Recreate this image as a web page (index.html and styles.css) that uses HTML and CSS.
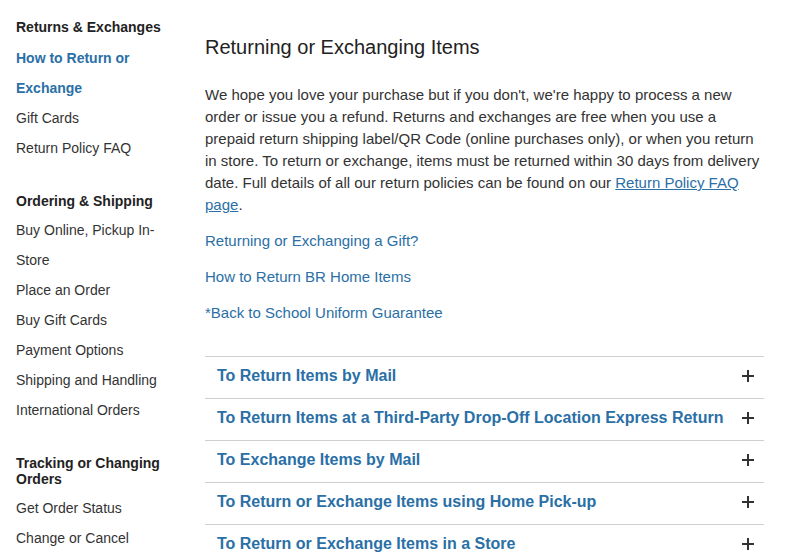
FILE: index.html
```html
<!DOCTYPE html>
<html lang="en">
<head>
<meta charset="utf-8">
<title>Returning or Exchanging Items</title>
<link rel="stylesheet" href="styles.css">
</head>
<body>
<div class="page">
  <nav class="sidebar">
    <div class="group">
      <h3 class="group-title">Returns &amp; Exchanges</h3>
      <a class="nav-link active" href="#">How to Return or Exchange</a>
      <a class="nav-link" href="#">Gift Cards</a>
      <a class="nav-link" href="#">Return Policy FAQ</a>
    </div>
    <div class="group">
      <h3 class="group-title">Ordering &amp; Shipping</h3>
      <a class="nav-link" href="#">Buy Online, Pickup In-Store</a>
      <a class="nav-link" href="#">Place an Order</a>
      <a class="nav-link" href="#">Buy Gift Cards</a>
      <a class="nav-link" href="#">Payment Options</a>
      <a class="nav-link" href="#">Shipping and Handling</a>
      <a class="nav-link" href="#">International Orders</a>
    </div>
    <div class="group">
      <h3 class="group-title">Tracking or Changing Orders</h3>
      <a class="nav-link" href="#">Get Order Status</a>
      <a class="nav-link" href="#">Change or Cancel</a>
    </div>
  </nav>
  <main class="content">
    <h1 class="title">Returning or Exchanging Items</h1>
    <p class="intro">We hope you love your purchase but if you don't, we're happy to process a new order or issue you a refund. Returns and exchanges are free when you use a prepaid return shipping label/QR Code (online purchases only), or when you return in store. To return or exchange, items must be returned within 30 days from delivery date. Full details of all our return policies can be found on our <a class="inline-link" href="#">Return Policy FAQ page</a>.</p>
    <a class="quick-link" href="#">Returning or Exchanging a Gift?</a>
    <a class="quick-link" href="#">How to Return BR Home Items</a>
    <a class="quick-link" href="#">*Back to School Uniform Guarantee</a>
    <div class="accordion">
      <div class="acc-row"><span class="acc-title">To Return Items by Mail</span><svg class="plus" width="14" height="14" viewBox="0 0 14 14"><path d="M7 1v12M1 7h12" stroke="#333" stroke-width="2"/></svg></div>
      <div class="acc-row"><span class="acc-title">To Return Items at a Third-Party Drop-Off Location Express Return</span><svg class="plus" width="14" height="14" viewBox="0 0 14 14"><path d="M7 1v12M1 7h12" stroke="#333" stroke-width="2"/></svg></div>
      <div class="acc-row"><span class="acc-title">To Exchange Items by Mail</span><svg class="plus" width="14" height="14" viewBox="0 0 14 14"><path d="M7 1v12M1 7h12" stroke="#333" stroke-width="2"/></svg></div>
      <div class="acc-row"><span class="acc-title">To Return or Exchange Items using Home Pick-up</span><svg class="plus" width="14" height="14" viewBox="0 0 14 14"><path d="M7 1v12M1 7h12" stroke="#333" stroke-width="2"/></svg></div>
      <div class="acc-row"><span class="acc-title">To Return or Exchange Items in a Store</span><svg class="plus" width="14" height="14" viewBox="0 0 14 14"><path d="M7 1v12M1 7h12" stroke="#333" stroke-width="2"/></svg></div>
    </div>
  </main>
</div>
</body>
</html>
```
FILE: styles.css
```css
html, body {
  margin: 0;
  padding: 0;
  background: #fff;
  font-family: "Liberation Sans", Arial, sans-serif;
  color: #333;
}
.page {
  display: flex;
  align-items: flex-start;
  height: 558px;
  overflow: hidden;
}
.sidebar {
  width: 155px;
  flex: none;
  padding: 19px 0 0 16px;
  display: flex;
  flex-direction: column;
  gap: 30px;
}
.group {
  display: flex;
  flex-direction: column;
}
.group-title {
  margin: 0 0 6px;
  font-size: 14px;
  line-height: 16px;
  font-weight: bold;
  color: #222;
}
.group:first-child .group-title {
  margin-bottom: 8px;
}
.nav-link {
  font-size: 14px;
  line-height: 30px;
  color: #333;
  text-decoration: none;
}
.nav-link.active {
  color: #2a6fa6;
  font-weight: bold;
}
.content {
  margin-left: 34px;
  width: 559px;
  padding-top: 35px;
  display: flex;
  flex-direction: column;
}
.title {
  margin: 0 0 25px;
  font-size: 20px;
  line-height: 24px;
  font-weight: normal;
  color: #222;
}
.intro {
  margin: 0;
  font-size: 15px;
  line-height: 22px;
  color: #333;
}
.inline-link {
  color: #2a6fa6;
  text-decoration: underline;
}
.quick-link {
  margin-top: 14px;
  font-size: 15px;
  line-height: 22px;
  color: #2a6fa6;
  text-decoration: none;
  align-self: flex-start;
}
.accordion {
  margin-top: 32px;
}
.acc-row {
  display: flex;
  align-items: center;
  justify-content: space-between;
  box-sizing: border-box;
  height: 42px;
  border-top: 1px solid #cfcfcf;
  padding: 0 9px 4px 12px;
}
.acc-title {
  font-size: 16px;
  font-weight: bold;
  color: #2a6fa6;
}
.plus {
  flex: none;
}
```
